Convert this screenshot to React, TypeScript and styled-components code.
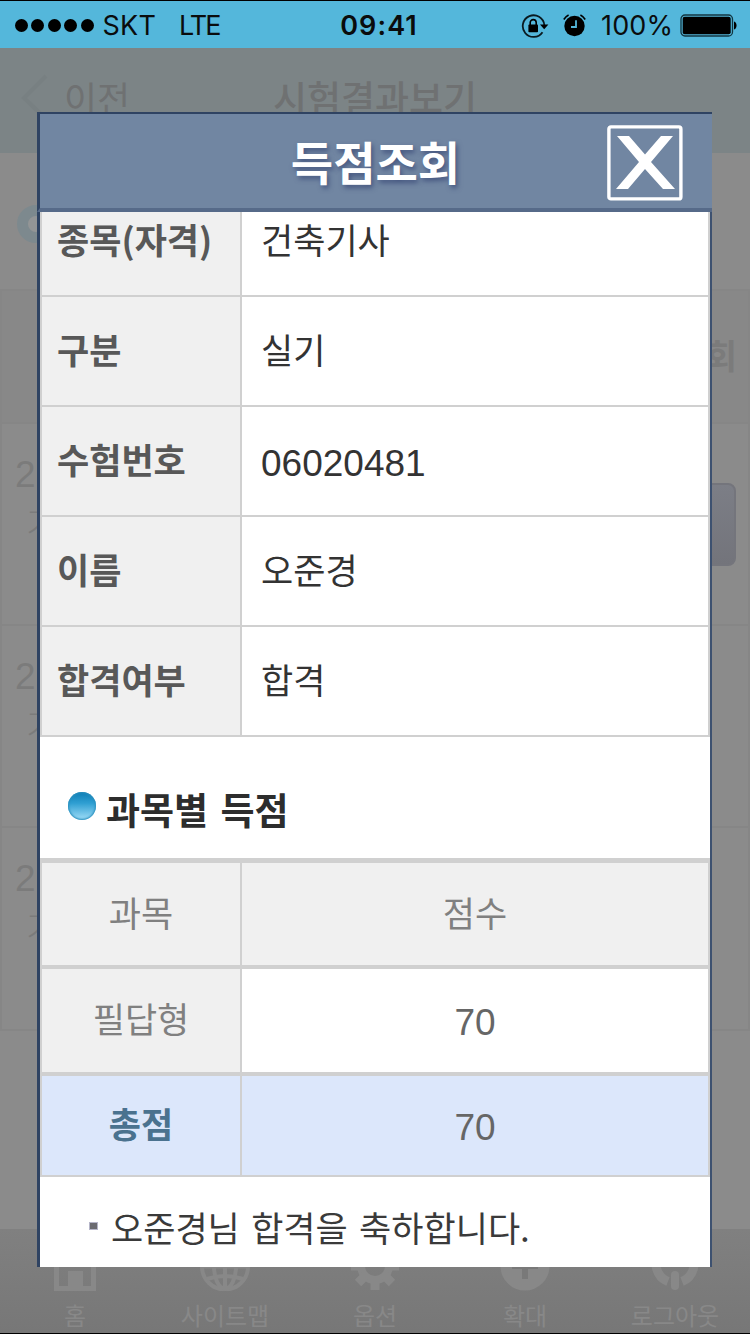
import React from "react";
import styled, { createGlobalStyle } from "styled-components";

const Global = createGlobalStyle`
  * { box-sizing: border-box; }
  body { margin: 0; background: #8b8b8b; }
`;
const kr = `"Noto Sans CJK KR", sans-serif`;

const Screen = styled.div`
  position: relative;
  width: 750px;
  height: 1334px;
  overflow: hidden;
  display: flex;
  flex-direction: column;
  background: #8b8b8b;
  border-top: 1px solid #000;
  border-bottom: 1px solid #000;
  font-family: ${kr};
`;
const StatusBar = styled.div`
  height: 47px;
  flex: none;
  display: flex;
  align-items: center;
  background: #54b7db;
  padding: 2px 12px 0 15px;
  font: 400 27px/45px Inter, sans-serif;
  color: #0a0c0d;
  svg { flex: none; }
`;
const Side = styled.div<{ $end?: boolean }>`
  flex: 1;
  display: flex;
  align-items: center;
  justify-content: ${(p) => (p.$end ? "flex-end" : "flex-start")};
`;
const Dots = styled.div`
  display: flex;
  gap: 3.4px;
  margin-right: 9px;
`;
const Dot = styled.i`
  width: 13px;
  height: 13px;
  border-radius: 50%;
  background: #000;
`;
const Carrier = styled.span<{ $gap?: number; $tight?: boolean }>`
  margin-right: ${(p) => p.$gap ?? 0}px;
  letter-spacing: ${(p) => (p.$tight ? -1.9 : 0.2)}px;
`;
const Clock = styled.div`
  font-weight: 600;
  letter-spacing: 1.1px;
  padding-left: 5px;
`;
const Percent = styled.span`
  letter-spacing: 0.1px;
`;

const NavBar = styled.div`
  height: 105px;
  flex: none;
  display: flex;
  align-items: center;
  justify-content: center;
  position: relative;
  background: #7c8486;
  color: #6f7172;
  font-size: 36px;
  line-height: 50px;
  padding-bottom: 8px;
`;
const Back = styled.div`
  position: absolute;
  left: 20px;
  top: 24px;
  display: flex;
  gap: 16px;
`;
const NavTitle = styled.div`
  font-weight: 500;
  font-size: 37px;
`;
const Heading = styled.div`
  height: 136px;
  flex: none;
  padding: 52px 0 0 17px;
`;
const Ring = styled.div`
  width: 38px;
  height: 38px;
  border-radius: 50%;
  border: 11px solid #7d898e;
  background: #939596;
`;
const ListRow = styled.div<{ $h: number }>`
  height: ${(p) => p.$h}px;
  flex: none;
  display: flex;
  justify-content: space-between;
  border-top: 2px solid #868686;
  border-left: 2px solid #868686;
  border-right: 2px solid #868686;
  padding: 27px 12px 0 13px;
  color: #7b7b7b;
  font-size: 35px;
  line-height: 47px;
`;
const ListHead = styled(ListRow)`
  padding-top: 40px;
  padding-right: 11px;
  justify-content: flex-end;
  font-weight: 700;
  font-size: 34px;
  background: #888;
`;
const ListText = styled.div`
  display: flex;
  flex-direction: column;
  span:first-child { font-family: "Liberation Sans", sans-serif; font-size: 37px; }
  span:last-child { padding-left: 11px; font-weight: 300; }
`;
const ListButton = styled.div`
  width: 110px;
  height: 83px;
  margin-top: 32px;
  border-radius: 8px;
  border: 2px solid #74757c;
  background: linear-gradient(#7c7e86, #73747b);
`;
const Rest = styled.div`
  flex: 1;
  border-top: 2px solid #868686;
`;
const TabBar = styled.div`
  height: 104px;
  flex: none;
  display: grid;
  grid-template-columns: repeat(5, 150px);
  background: linear-gradient(#808080, #777);
  color: #888;
`;
const Tab = styled.div`
  display: flex;
  flex-direction: column;
  align-items: center;
  padding-top: 14px;
  font-size: 24px;
  line-height: 30px;
  svg { display: block; margin-bottom: 9px; }
`;

const Modal = styled.div`
  position: absolute;
  left: 37px;
  top: 111px;
  width: 675px;
  height: 1155px;
  display: flex;
  flex-direction: column;
`;
const ModalHeader = styled.div`
  height: 100px;
  flex: none;
  display: flex;
  align-items: center;
  justify-content: flex-end;
  padding: 4px 29px 0 0;
  background: #7186a2;
  border-top: 2px solid #2f4362;
  border-bottom: 4px solid #566a89;
  border-left: 3px solid #2f4362;
`;
const ModalTitle = styled.div`
  flex: 1;
  padding: 0 0 7px 104px;
  text-align: center;
  color: #fff;
  font-weight: 700;
  font-size: 46px;
  line-height: 60px;
  text-shadow: 2px 3px 5px #44557f;
`;
const ModalBody = styled.div`
  flex: 1;
  min-height: 0;
  overflow: hidden;
  background: #fff;
  border-left: 3px solid #2f4362;
  border-right: 2px solid #3d5170;
`;
const Table = styled.div`
  border: solid #d0d0d0;
  border-width: 0 2px 0 2px;
`;
const Row = styled.div<{ $h: number; $line?: number }>`
  display: grid;
  grid-template-columns: 200px 1fr;
  height: ${(p) => p.$h}px;
  border-bottom: ${(p) => p.$line ?? 2}px solid #d0d0d0;
`;
const Label = styled.div<{ $cut?: boolean }>`
  background: #f0f0f0;
  border-right: 2px solid #d0d0d0;
  display: flex;
  align-items: center;
  padding: 0 0 ${(p) => (p.$cut ? 29 : 4)}px 15px;
  font-weight: 700;
  font-size: 35px;
  line-height: 50px;
  color: #585858;
`;
const Value = styled.div<{ $num?: boolean; $cut?: boolean }>`
  display: flex;
  align-items: center;
  padding: ${(p) => (p.$num ? "6px 0 0 19px" : p.$cut ? "0 0 29px 19px" : "0 0 4px 19px")};
  font-family: ${(p) => (p.$num ? `"Liberation Sans", sans-serif` : kr)};
  font-size: ${(p) => (p.$num ? 37 : 35)}px;
  line-height: 50px;
  color: #333;
`;
const Section = styled.div`
  height: 121px;
  display: flex;
  align-items: center;
  gap: 10px;
  padding: 22px 0 0 28px;
  font-weight: 700;
  font-size: 37px;
  line-height: 50px;
  word-spacing: 4px;
  color: #2d2d2d;
`;
const Bullet = styled.i`
  width: 28px;
  height: 28px;
  margin-top: -5px;
  border-radius: 50%;
  background: linear-gradient(#0d7db5, #2f9fd2 40%, #8fd4f2 90%);
  box-shadow: inset 0 0 2px 1px #2a8fbd;
`;
const ScoreTable = styled(Table)`
  border-top-width: 5px;
`;
const Cell = styled.div<{ $bg?: string; $color?: string; $bold?: boolean; $num?: boolean; $first?: boolean }>`
  display: flex;
  align-items: center;
  justify-content: center;
  background: ${(p) => p.$bg ?? "#fff"};
  color: ${(p) => p.$color ?? "#808080"};
  font-weight: ${(p) => (p.$bold ? 700 : 400)};
  font-family: ${(p) => (p.$num ? `"Liberation Sans", sans-serif` : kr)};
  font-size: ${(p) => (p.$num ? 37 : 35)}px;
  line-height: 50px;
  border-right: ${(p) => (p.$first ? "2px solid #d0d0d0" : "0")};
  padding: ${(p) => (p.$num ? "4px 0 0" : "0 0 5px")};
`;
const Notice = styled.div`
  display: flex;
  align-items: center;
  gap: 13px;
  padding: 24px 0 0 49px;
  font-size: 35px;
  line-height: 52px;
  word-spacing: 3.5px;
  color: #3a3a3a;
`;
const Square = styled.i`
  width: 9px;
  height: 8px;
  margin-top: -3px;
  background: #6b6b70;
  border: 1px solid #b5b5c8;
`;
const LockSvg = styled.svg`
  margin-right: 14px;
`;
const AlarmSvg = styled.svg`
  margin-right: 15px;
`;
const BatterySvg = styled.svg`
  margin-left: 7px;
`;

const info: [string, string][] = [
  ["종목(자격)", "건축기사"],
  ["구분", "실기"],
  ["수험번호", "06020481"],
  ["이름", "오준경"],
  ["합격여부", "합격"],
];

const LockIcon = () => (
  <LockSvg width="28" height="24" viewBox="0 0 28 24">
    <path d="M21.5 18.2A10.8 10.8 0 1 1 23.3 11" fill="none" stroke="#0a1a20" strokeWidth="1.8" />
    <path d="M19 10.5h8.4l-4.2 4.8z" fill="#000" />
    <rect x="7.4" y="10.6" width="9.6" height="7.6" rx=".8" fill="#000" />
    <path d="M9.2 11V8.6a3 3 0 0 1 6 0V11" fill="none" stroke="#000" strokeWidth="1.6" />
  </LockSvg>
);
const AlarmIcon = () => (
  <AlarmSvg width="23" height="23" viewBox="0 0 23 23">
    <circle cx="11.5" cy="12" r="10.2" fill="#000" />
    <path d="M.8 5.500A12 12 0 0 1 5.600 1M22.200 5.500A12 12 0 0 0 17.400 1" fill="none" stroke="#000" strokeWidth="1.6" />
    <path d="M13 6.2V13H8" fill="none" stroke="#54b7db" strokeWidth="1.8" />
  </AlarmSvg>
);
const BatteryIcon = () => (
  <BatterySvg width="58" height="24" viewBox="0 0 58 24">
    <rect x="1" y="1" width="51.5" height="21" rx="4" fill="none" stroke="#123641" strokeWidth="1.3" />
    <rect x="2.7" y="2.7" width="48" height="17.6" rx="2" fill="#000" />
    <path d="M54 7.5c3.4.7 3.4 7.3 0 8z" fill="#000" />
  </BatterySvg>
);
const CloseIcon = () => (
  <svg width="76" height="76" viewBox="0 0 76 76">
    <rect x="1.9" y="1.9" width="72" height="72" rx="2" fill="none" stroke="#fff" strokeWidth="3.4" />
    <path d="M10 11h12L38 29.5 54 11h12L44 37l24 27H56L38 44 21 64H9l23-27z" fill="#fff" />
  </svg>
);

const icons = [
  <svg key="h" width="48" height="48" viewBox="0 0 48 48" fill="#888"><path d="M24 0 0 22h3v26h42V22h3zM40 43H32V28H17v15H8V22L24 8l16 14z" fillRule="evenodd" /><path d="M17 28h15v18H17z" /></svg>,
  <svg key="s" width="50" height="48" viewBox="0 0 50 48" fill="none" stroke="#888" strokeWidth="4"><circle cx="25" cy="23.5" r="23" /><ellipse cx="25" cy="23.5" rx="11" ry="22" /><path d="M25 1v45M3 23.5h44M7 36q18-6 36 0M7 13q18 6 36 0" /></svg>,
  <svg key="o" width="50" height="48" viewBox="0 0 50 48" fill="none" stroke="#888"><circle cx="25" cy="23" r="14" strokeWidth="8" /><g strokeWidth="9"><path d="M25 0v8M25 38v9M1 23h9M40 23h9M8 6l7 7M35 33l7 7M42 6l-7 7M15 33l-7 7" /></g></svg>,
  <svg key="p" width="50" height="48" viewBox="0 0 50 48"><circle cx="25" cy="23" r="24.5" fill="#888" /><path d="M25 10v26M12 23h26" stroke="#797979" strokeWidth="6" /></svg>,
  <svg key="l" width="50" height="48" viewBox="0 0 50 48" fill="none" stroke="#888"><path d="M18 38.500A19 19 0 1 1 32 38.500" strokeWidth="9" /><path d="M25 32v11" strokeWidth="8" strokeLinecap="round" /></svg>,
];
const tabs = ["홈", "사이트맵", "옵션", "확대", "로그아웃"];

export default function App() {
  return (
    <Screen>
      <Global />
      <StatusBar>
        <Side>
          <Dots>{[0, 1, 2, 3, 4].map((i) => <Dot key={i} />)}</Dots>
          <Carrier $gap={23}>SKT</Carrier>
          <Carrier $tight>LTE</Carrier>
        </Side>
        <Clock>09:41</Clock>
        <Side $end>
          <LockIcon />
          <AlarmIcon />
          <Percent>100%</Percent>
          <BatteryIcon />
        </Side>
      </StatusBar>
      <NavBar>
        <Back>
          <svg width="28" height="48" viewBox="0 0 28 48"><path d="M26 4 4 26l22 21" fill="none" stroke="#788082" strokeWidth="4" /></svg>
          <span>이전</span>
        </Back>
        <NavTitle>시험결과보기</NavTitle>
      </NavBar>
      <Heading><Ring /></Heading>
      <ListHead $h={133}>회</ListHead>
      {[0, 1, 2].map((i) => (
        <ListRow key={i} $h={i === 2 ? 203 : 202}>
          <ListText><span>2</span><span>기</span></ListText>
          {i === 0 && <ListButton />}
        </ListRow>
      ))}
      <Rest />
      <TabBar>
        {tabs.map((t, i) => <Tab key={t}>{icons[i]}{t}</Tab>)}
      </TabBar>

      <Modal>
        <ModalHeader>
          <ModalTitle>득점조회</ModalTitle>
          <CloseIcon />
        </ModalHeader>
        <ModalBody>
          <Table>
            {info.map(([label, value], i) => (
              <Row key={label} $h={i === 0 ? 85 : 110}>
                <Label $cut={i === 0}>{label}</Label>
                <Value $cut={i === 0} $num={i === 2}>{value}</Value>
              </Row>
            ))}
          </Table>
          <Section><Bullet />과목별 득점</Section>
          <ScoreTable>
            <Row $h={106} $line={4}>
              <Cell $first $bg="#f0f0f0">과목</Cell>
              <Cell $bg="#f0f0f0">점수</Cell>
            </Row>
            <Row $h={107} $line={4}>
              <Cell $first $bg="#f0f0f0">필답형</Cell>
              <Cell $num $color="#666">70</Cell>
            </Row>
            <Row $h={101}>
              <Cell $first $bold $bg="#dce7fb" $color="#4a728f">총점</Cell>
              <Cell $num $bg="#dce7fb" $color="#666">70</Cell>
            </Row>
          </ScoreTable>
          <Notice><Square />오준경님 합격을 축하합니다.</Notice>
        </ModalBody>
      </Modal>
    </Screen>
  );
}
